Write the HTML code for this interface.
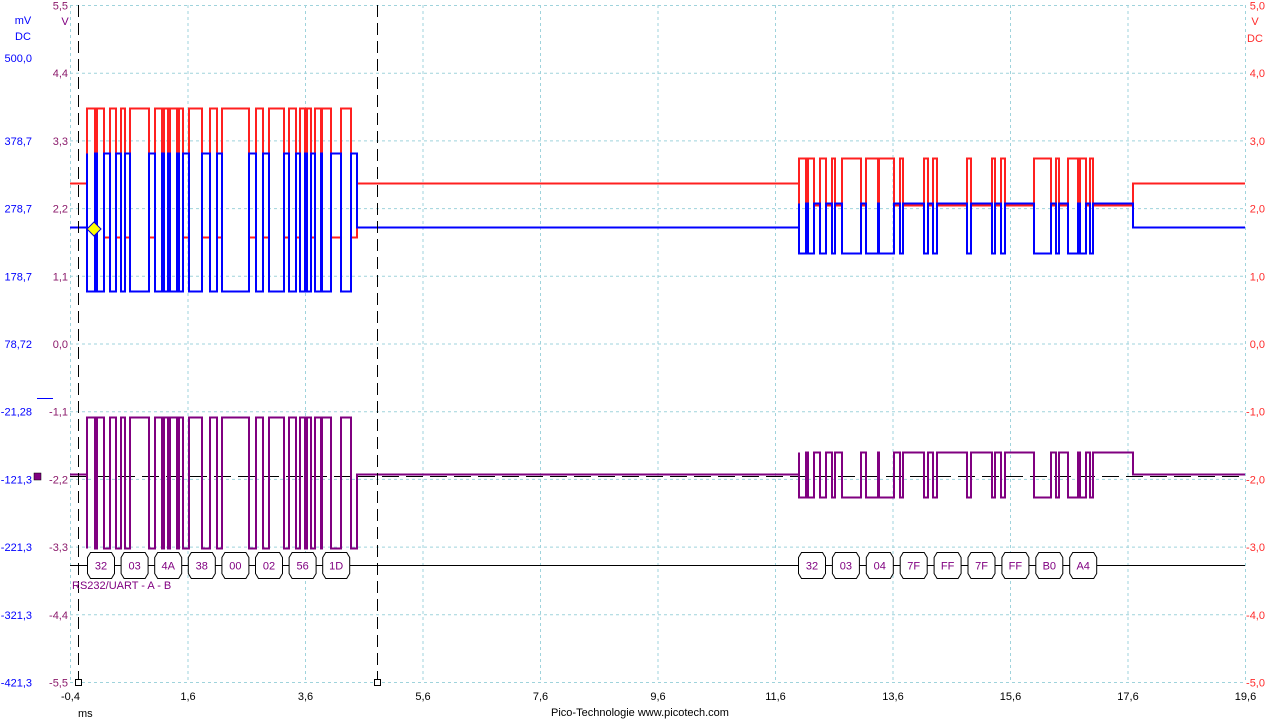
<!DOCTYPE html>
<html><head><meta charset="utf-8"><style>
html,body{margin:0;padding:0;background:#fff;width:1280px;height:720px;overflow:hidden}
svg{display:block;font-family:"Liberation Sans",sans-serif;font-size:11px}
</style></head><body>
<svg id="s" width="1280" height="720" viewBox="0 0 1280 720" xmlns="http://www.w3.org/2000/svg">
<g id="grid" stroke="#9fd3dc" stroke-width="1" stroke-dasharray="3,3" fill="none"></g>
<g id="labels"></g>
<line x1="70" y1="565.5" x2="1245" y2="565.5" stroke="#000" stroke-width="1"/>
<g id="dec"></g>
<line x1="70" y1="476.5" x2="1245" y2="476.5" stroke="#000" stroke-width="1" stroke-dasharray="17,7"/>
<path id="pr" fill="none" stroke="#800080" stroke-width="1.6" shape-rendering="crispEdges"/>
<path id="rd" fill="none" stroke="#ff2020" stroke-width="1.6" shape-rendering="crispEdges"/>
<path id="bl" fill="none" stroke="#0000ff" stroke-width="1.6" shape-rendering="crispEdges"/>
<line x1="78.5" y1="5" x2="78.5" y2="680" stroke="#000" stroke-dasharray="12,6"/>
<line x1="377.5" y1="5" x2="377.5" y2="680" stroke="#000" stroke-dasharray="12,6"/>
<rect x="75.5" y="679.5" width="6" height="6" fill="#fff" stroke="#000"/>
<rect x="374.5" y="679.5" width="6" height="6" fill="#fff" stroke="#000"/>
<polygon points="94,222 101,229 94,236 87,229" fill="#ffff00" stroke="#0000cc" stroke-width="1"/>
<line x1="37" y1="398.5" x2="53" y2="398.5" stroke="#0000ff"/>
<rect x="34" y="473" width="7" height="7" fill="#800080" stroke="#000" stroke-width="0.5"/>
<text x="72" y="589" fill="#800080" font-size="11">RS232/UART - A - B</text>
<text x="78" y="717" fill="#000">ms</text>
<text x="640" y="716" fill="#000" text-anchor="middle">Pico-Technologie  www.picotech.com</text>
<text x="23" y="24" fill="#0000ff" text-anchor="middle">mV</text>
<text x="23" y="40" fill="#0000ff" text-anchor="middle">DC</text>
<text x="65" y="25" fill="#800080" text-anchor="middle">V</text>
<text x="1255" y="25" fill="#ff2b2b" text-anchor="middle">V</text>
<text x="1255" y="42" fill="#ff2b2b" text-anchor="middle">DC</text>
</svg>
<script>
var NS="http://www.w3.org/2000/svg";
function el(p,t,a,txt){var e=document.createElementNS(NS,t);for(var k in a)e.setAttribute(k,a[k]);if(txt!=null)e.textContent=txt;p.appendChild(e);return e;}
var g=document.getElementById('grid'),L=document.getElementById('labels');
var ys=[],xs=[];
for(var i=0;i<=10;i++){ys.push(5.5+i*67.7);xs.push(70.5+i*117.5);}
ys.forEach(function(y){el(g,'line',{x1:70,y1:y,x2:1245,y2:y});});
xs.forEach(function(x){el(g,'line',{x1:x,y1:5,x2:x,y2:682});});
var vl=["5,5","4,4","3,3","2,2","1,1","0,0","-1,1","-2,2","-3,3","-4,4","-5,5"];
var ml=["","500,0","378,7","278,7","178,7","78,72","-21,28","-121,3","-221,3","-321,3","-421,3"];
var rl=["5,0","4,0","3,0","2,0","1,0","0,0","-1,0","-2,0","-3,0","-4,0","-5,0"];
ys.forEach(function(y,i){
 el(L,'text',{x:68,y:y+4,fill:'#8b1a6b','text-anchor':'end'},vl[i]);
 el(L,'text',{x:1265,y:y+4,fill:'#ff2b2b','text-anchor':'end'},rl[i]);
 if(ml[i]){var yy=(i==1)?62:y+4;el(L,'text',{x:32,y:yy,fill:'#0000ff','text-anchor':'end'},ml[i]);}
});
var xl=["-0,4","1,6","3,6","5,6","7,6","9,6","11,6","13,6","15,6","17,6","19,6"];
xs.forEach(function(x,i){el(L,'text',{x:x,y:700,fill:'#000','text-anchor':'middle'},xl[i]);});
var D=document.getElementById('dec');
function box(cx,t){var w=27,h=26,y=552.5,x=cx-w/2;
 el(D,'polygon',{points:(x+3)+','+y+' '+(x+w-3)+','+y+' '+(x+w)+','+(y+5)+' '+(x+w)+','+(y+h-5)+' '+(x+w-3)+','+(y+h)+' '+(x+3)+','+(y+h)+' '+x+','+(y+h-5)+' '+x+','+(y+5),fill:'#fff',stroke:'#000'});
 el(D,'text',{x:cx,y:y+17,fill:'#800080','text-anchor':'middle'},t);}
var lb=["32","03","4A","38","00","02","56","1D"];
lb.forEach(function(t,i){box(101+i*33.6,t);});
var rb=["32","03","04","7F","FF","7F","FF","B0","A4"];
rb.forEach(function(t,i){box(812+i*33.9,t);});
var left=[[87,95],[97,104],[110,116],[121,125],[130,149],[155,162],[164,168],[170,177],[179,183],[189,202],[210,217],[222,249],[256,263],[269,284],[289,296],[300,305],[307,311],[315,321],[322,331],[341,351]];
var right=[[799,806],[808,814],[820,826],[832,835],[842,861],[866,878],[879,894],[900,903],[924,928],[933,937],[967,971],[992,995],[1001,1005],[1034,1051],[1056,1059],[1068,1078],[1080,1086],[1090,1093]];
function build(idle,lh,ll,rh,rlw){
 var d='M70 '+idle+' H87 V'+ll;
 left.forEach(function(s){d+=' H'+s[0]+' V'+lh+' H'+s[1]+' V'+ll;});
 d+=' H357 V'+idle+' H799 V'+rlw;
 right.forEach(function(s){d+=' H'+s[0]+' V'+rh+' H'+s[1]+' V'+rlw;});
 d+=' H1133 V'+idle+' H1245';
 return d;}
document.getElementById('rd').setAttribute('d',build(183.5,108.5,237.5,158.5,205.5));
document.getElementById('bl').setAttribute('d',build(227.5,291.5,153.5,253.5,203.5));
document.getElementById('pr').setAttribute('d',build(474.5,417.5,548.5,497.5,452.5));
</script>
</body></html>
